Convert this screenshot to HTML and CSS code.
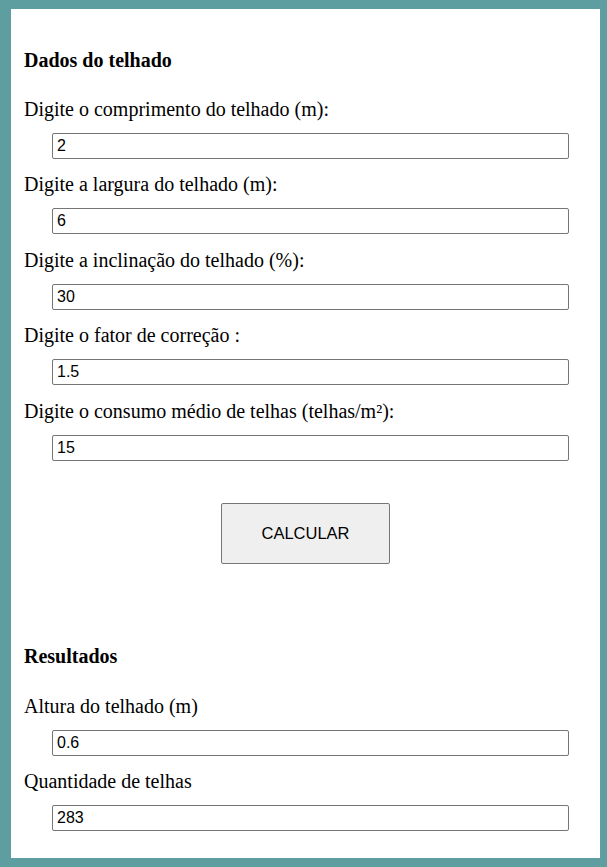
FILE: index.html
```html
<!DOCTYPE html>
<html lang="pt">
<head>
<meta charset="utf-8">
<title>Telhado</title>
<link rel="stylesheet" href="styles.css">
</head>
<body>
<main class="card">
  <section class="group">
    <h3 class="title">Dados do telhado</h3>
    <div class="field">
      <label class="label" for="c">Digite o comprimento do telhado (m):</label>
      <input class="input" id="c" type="text" value="2">
    </div>
    <div class="field">
      <label class="label" for="l">Digite a largura do telhado (m):</label>
      <input class="input" id="l" type="text" value="6">
    </div>
    <div class="field">
      <label class="label" for="i">Digite a inclinação do telhado (%):</label>
      <input class="input" id="i" type="text" value="30">
    </div>
    <div class="field">
      <label class="label" for="f">Digite o fator de correção :</label>
      <input class="input" id="f" type="text" value="1.5">
    </div>
    <div class="field">
      <label class="label" for="m">Digite o consumo médio de telhas (telhas/m²):</label>
      <input class="input" id="m" type="text" value="15">
    </div>
    <button class="btn" type="button">CALCULAR</button>
  </section>
  <section class="group results">
    <h3 class="title">Resultados</h3>
    <div class="field">
      <label class="label" for="a">Altura do telhado (m)</label>
      <input class="input" id="a" type="text" value="0.6">
    </div>
    <div class="field">
      <label class="label" for="q">Quantidade de telhas</label>
      <input class="input" id="q" type="text" value="283">
    </div>
  </section>
</main>
</body>
</html>
```

FILE: styles.css
```css
html, body {
  margin: 0;
  padding: 0;
}
body {
  background: #5f9ea0;
  padding: 9px 7px 9px 11px;
  height: 867px;
  box-sizing: border-box;
  font-family: "Liberation Serif", "Times New Roman", serif;
  color: #000;
}
.card {
  background: #fff;
  height: 849px;
  box-sizing: border-box;
  padding: 39.5px 13px 0 13px;
  display: flex;
  flex-direction: column;
}
.group {
  display: flex;
  flex-direction: column;
}
.title {
  margin: 0 0 26px 0;
  font-size: 20px;
  line-height: 23px;
  font-weight: bold;
}
.field {
  display: flex;
  flex-direction: column;
  align-items: flex-start;
}
.field + .field {
  margin-top: 14.5px;
}
.label {
  font-size: 20px;
  line-height: 23px;
}
.input {
  margin: 12px 0 0 28px;
  width: 517px;
  height: 26px;
  box-sizing: border-box;
  border: 1px solid #767676;
  border-radius: 2px;
  padding: 1px 4px;
  font-family: "Liberation Sans", Arial, sans-serif;
  font-size: 16px;
  color: #000;
  background: #fff;
}
.btn {
  align-self: center;
  margin-top: 42px;
  width: 169px;
  height: 61px;
  background: #efefef;
  border: 1px solid #767676;
  border-radius: 2px;
  font-family: "Liberation Sans", Arial, sans-serif;
  font-size: 16.5px;
  color: #000;
  padding: 0;
}
.results {
  margin-top: 81.5px;
}
.results .title {
  margin-bottom: 26.5px;
}
```
